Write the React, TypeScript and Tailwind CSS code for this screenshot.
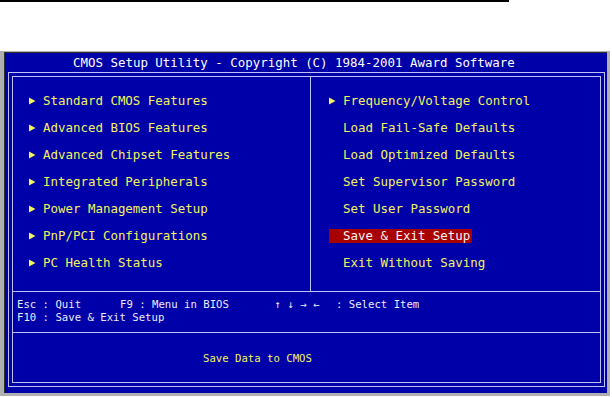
import React from "react";

const mono = { fontFamily: "'DejaVu Sans Mono', 'Liberation Mono', monospace" };

function Tri() {
  return (
    <svg width="7" height="8" viewBox="0 0 7 8" className="block">
      <polygon points="0,0.5 6.5,4 0,7.5" fill="#f4f460" />
    </svg>
  );
}

function Row({ text, arrow, active }: { text: string; arrow?: boolean; active?: boolean }) {
  return (
    <div
      className={`flex items-center h-[14px] w-fit pr-[2px] ${active ? "bg-[#a80000] text-[#f4f4f4]" : "text-[#f4f460]"}`}
    >
      <span className="w-[14px] flex items-center">{arrow ? <Tri /> : null}</span>
      <span className="whitespace-pre leading-[14px]">{text}</span>
    </div>
  );
}

export default function App() {
  const left = [
    "Standard CMOS Features",
    "Advanced BIOS Features",
    "Advanced Chipset Features",
    "Integrated Peripherals",
    "Power Management Setup",
    "PnP/PCI Configurations",
    "PC Health Status",
  ];
  const right: { t: string; a?: boolean; s?: boolean }[] = [
    { t: "Frequency/Voltage Control", a: true },
    { t: "Load Fail-Safe Defaults" },
    { t: "Load Optimized Defaults" },
    { t: "Set Supervisor Password" },
    { t: "Set User Password" },
    { t: "Save & Exit Setup", s: true },
    { t: "Exit Without Saving" },
  ];
  return (
    <div className="w-[612px] h-[397px] bg-white overflow-hidden flex flex-col" style={mono}>
      <div className="h-[2px] w-[509px] bg-black" />
      <div className="mt-[49px] w-[610px] h-[345px] bg-[#b0b0b0] pl-[4px] pt-[1px] pr-[3px] pb-[3px]">
        <div className="w-full h-full bg-[#0000a8] border-l border-t border-[#303030] flex flex-col">
          <div className="h-[19px] pt-[1px] flex items-center pl-[68px] text-white text-[12.45px] whitespace-pre">
            CMOS Setup Utility - Copyright (C) 1984-2001 Award Software
          </div>
          <div className="pl-[3px]">
            <div className="w-[597px] h-[315px] border border-[#c0c0f8] p-[3px]">
              <div className="w-full h-full border border-[#c0c0f8] flex flex-col">
                <div className="h-[215px] border-b border-[#c0c0f8] flex text-[12.45px]">
                  <div className="w-[298px] border-r border-[#c0c0f8] pl-[16px] pt-[17px] flex flex-col gap-[13px]">
                    {left.map((t) => (
                      <Row key={t} text={t} arrow />
                    ))}
                  </div>
                  <div className="flex-1 pl-[18px] pt-[17px] flex flex-col gap-[13px]">
                    {right.map((r) => (
                      <Row key={r.t} text={r.t} arrow={r.a} active={r.s} />
                    ))}
                  </div>
                </div>
                <div className="h-[41px] border-b border-[#c0c0f8] pt-[6px] pl-[4px] text-[10.65px] leading-[13px] text-[#ececf8]">
                  <div className="flex whitespace-pre">
                    <span className="w-[103px]">Esc : Quit</span>
                    <span className="w-[151px]">F9 : Menu in BIOS</span>
                    <span className="w-[65px] flex">
                      <span className="w-[13px] text-center">↑</span>
                      <span className="w-[13px] text-center">↓</span>
                      <span className="w-[13px] text-center">→</span>
                      <span className="w-[13px] text-center">←</span>
                    </span>
                    <span>: Select Item</span>
                  </div>
                  <div className="whitespace-pre">F10 : Save &amp; Exit Setup</div>
                </div>
                <div className="flex-1 flex items-center pt-[3px] pl-[190px] text-[10.65px] text-[#f4f460] whitespace-pre">
                  Save Data to CMOS
                </div>
              </div>
            </div>
          </div>
        </div>
      </div>
    </div>
  );
}
